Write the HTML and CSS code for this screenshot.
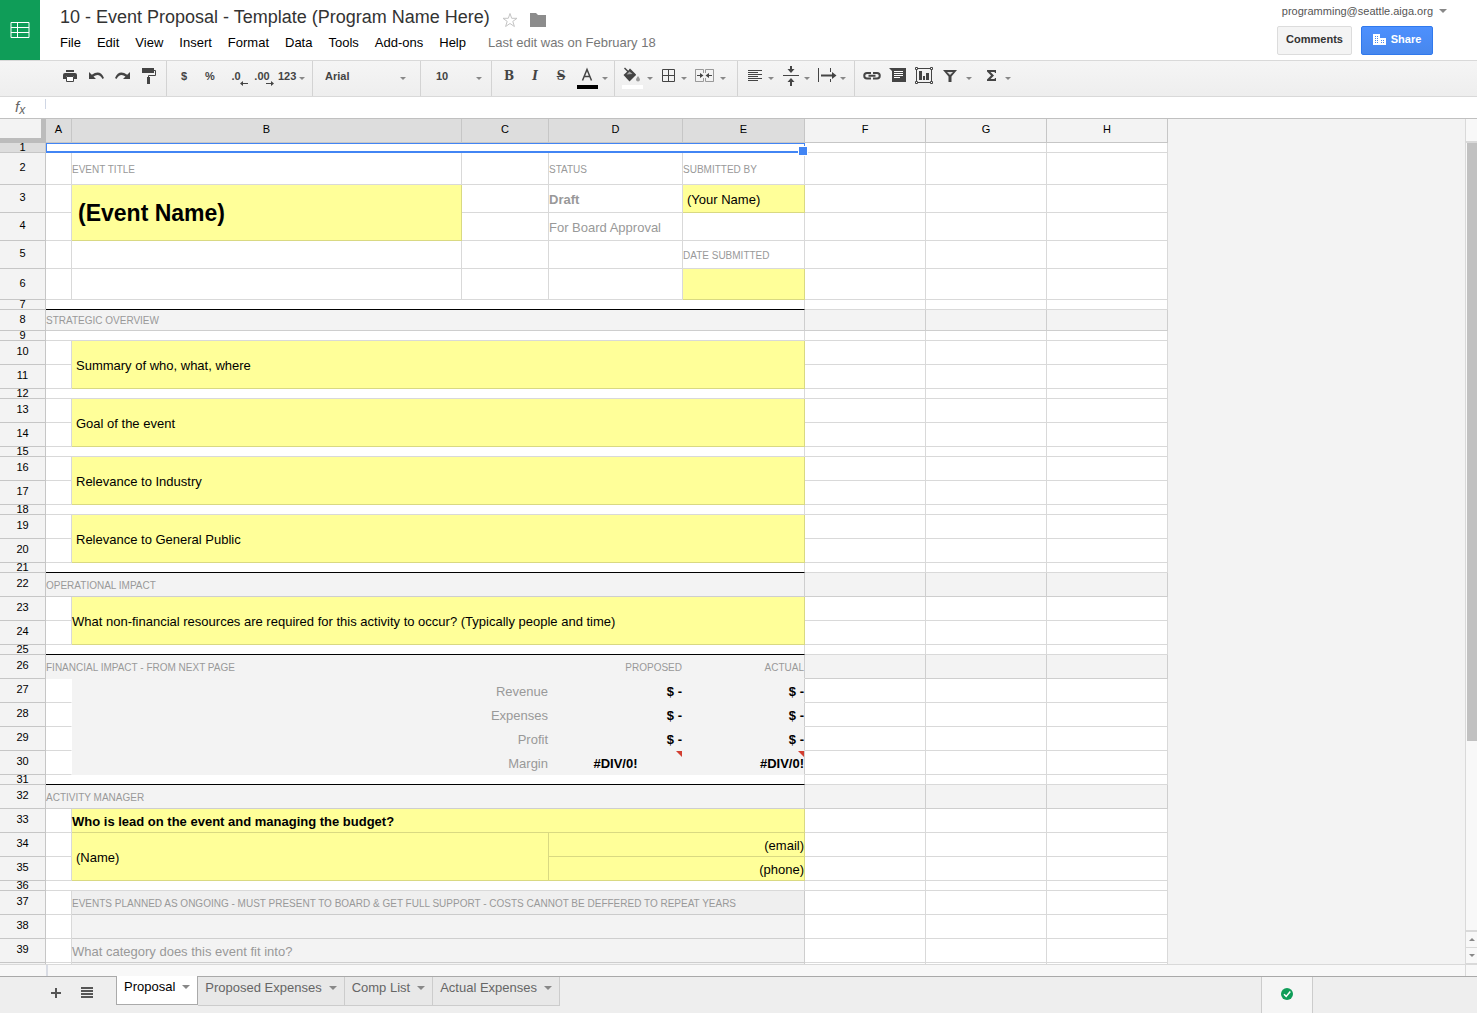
FILE: index.html
```html
<!DOCTYPE html>
<html lang="en">
<head>
    <meta charset="utf-8">
    <title>10 - Event Proposal - Template (Program Name Here)</title>
    <link rel="stylesheet" href="styles.css">
</head>
<body>
    <header class="header">
        <a class="logo" href="#" aria-label="Sheets home">
            <svg width="20" height="16" viewBox="0 0 20 16" fill="none" stroke="#fff"><path d="M1 .5h18v15H1zM1 5.5h18M1 10.5h18M7.5 .5v15"/></svg>
        </a>
        <div class="doc">
            <div class="title-row">
                <h1>10 - Event Proposal - Template (Program Name Here)</h1>
                <button class="plain" aria-label="Star">
                    <svg width="16" height="16" viewBox="0 0 16 16" fill="none" stroke="#c4c4c4"><path d="M8 1.500l1.700 4.800h5.300l-4.200 3.100 1.600 5.100L8 11.500l-4.400 3 1.600-5.100L1 6.300h5.300z"/></svg>
                </button>
                <button class="plain" aria-label="Move to folder">
                    <svg width="16" height="14" viewBox="0 0 16 14" fill="#8c8c8c"><path d="M0 0h6l2 2h8v12H0z"/></svg>
                </button>
            </div>
            <nav class="menu">
                <button>File</button>
                <button>Edit</button>
                <button>View</button>
                <button>Insert</button>
                <button>Format</button>
                <button>Data</button>
                <button>Tools</button>
                <button>Add-ons</button>
                <button>Help</button>
                <span class="last-edit">Last edit was on February 18</span>
            </nav>
        </div>
        <div class="account">
            <button class="email">programming@seattle.aiga.org <span class="caret big"></span></button>
            <div class="actions">
                <button class="btn">Comments</button>
                <button class="btn share">
                    <svg width="13" height="11" viewBox="0 0 13 11"><path fill="#fff" d="M0 0h7v4h6v7H0z"/><path stroke="#4787ed" stroke-dasharray="1 1" d="M2 2.5h4M2 4.5h4M2 6.5h4M2 8.5h4M8 6.5h4M8 8.5h4"/></svg>
                    Share
                </button>
            </div>
        </div>
    </header>

    <div class="toolbar">
        <div class="group first">
            <button class="tool" aria-label="Print">
                <svg width="20" height="20" viewBox="0 0 20 20" fill="#444"><path d="M6 4h8v2H6zM5 7h10q2 0 2 2v4h-3v-3H6v3H3V9q0-2 2-2z"/><path d="M6.500 10.500h7v5h-7z" fill="#fff" stroke="#444"/></svg>
            </button>
            <button class="tool" aria-label="Undo">
                <svg width="20" height="20" viewBox="0 0 20 20" fill="#444"><path d="M3 6v7h7L7.500 10.500Q13 6.500 16.500 13l1.500-1Q14 3 5.800 8.800z"/></svg>
            </button>
            <button class="tool" aria-label="Redo">
                <svg width="20" height="20" viewBox="0 0 20 20" fill="#444"><path d="M18 6v7h-7l2.500-2.500Q8 6.500 4.500 13L3 12Q7 3 15.200 8.800z"/></svg>
            </button>
            <button class="tool" aria-label="Paint format">
                <svg width="20" height="20" viewBox="0 0 20 20"><path d="M4 2h12v5H4z" fill="#444"/><path d="M16 4.500h1.500v5h-7V12" fill="none" stroke="#444"/><path d="M9 11h3v7H9z" fill="#444"/></svg>
            </button>
        </div>
        <div class="group">
            <button class="tool">$</button>
            <button class="tool">%</button>
            <button class="tool" aria-label="Decrease decimal places">.0<svg class="under" width="9" height="5" viewBox="0 0 9 5" fill="#444"><path d="M0 2.500L3 0v2h5v1H3v2z"/></svg></button>
            <button class="tool" aria-label="Increase decimal places">.00<svg class="under" width="9" height="5" viewBox="0 0 9 5" fill="#444"><path d="M8 2.500L5 0v2H0v1h5v2z"/></svg></button>
            <button class="tool drop formats">123<span class="caret"></span></button>
        </div>
        <div class="group">
            <label class="pick font">
                <select aria-label="Font"><option>Arial</option></select>
                <span class="caret"></span>
            </label>
        </div>
        <div class="group">
            <label class="pick size">
                <select aria-label="Font size"><option>10</option></select>
                <span class="caret"></span>
            </label>
        </div>
        <div class="group">
            <button class="tool serif">B</button>
            <button class="tool serif italic">I</button>
            <button class="tool serif strike">S</button>
            <button class="tool drop" aria-label="Text color">
                <svg width="22" height="26" viewBox="2 0 22 26"><path d="M7.500 17.500l4.500-11 4.500 11M9 13.500h6" fill="none" stroke="#444" stroke-width="1.500"/><path d="M2 22h21v4H2z"/></svg>
                <span class="caret"></span>
            </button>
        </div>
        <div class="group">
            <button class="tool drop" aria-label="Fill color">
                <svg width="22" height="26" viewBox="2 0 22 26"><path d="M4.500 5l4 4" stroke="#444" stroke-width="1.500"/><path d="M9.500 6l6 6" stroke="#444" stroke-width="1.500"/><path d="M3.500 12L9.500 6.500l6.500 5.500-6.500 6.500z" fill="#444"/><path d="M6.500 11.500l3-3 3 2.500z" fill="#aaa"/><path d="M18 13q2 2.600 2 3.600a2 2 0 0 1-4 0q0-1 2-3.600z" fill="#999"/><path d="M2 22h21v4H2z" fill="#fff"/></svg>
                <span class="caret"></span>
            </button>
            <button class="tool drop" aria-label="Borders">
                <svg width="20" height="20" viewBox="0 0 20 20" fill="none" stroke="#444"><path d="M4.500 3.500h12v12h-12zM10.500 3.500v12M4.500 9.500h12"/></svg>
                <span class="caret"></span>
            </button>
            <button class="tool drop wide" aria-label="Merge cells">
                <svg width="20" height="20" viewBox="0 0 20 20" fill="none" stroke="#999"><path d="M9.500 7V3.500h-8v4M1.500 12v3.500h8V12M11.500 7V3.500h8v4M19.500 12v3.500h-8V12M1.500 3.500v12M19.500 3.500v12"/><path stroke="#444" d="M3 9.500h4M18 9.500h-4"/><path fill="#444" stroke="none" d="M6 7l3.500 2.500L6 12zM15 7l-3.500 2.500L15 12z"/></svg>
                <span class="caret"></span>
            </button>
        </div>
        <div class="group">
            <button class="tool drop" aria-label="Horizontal align">
                <svg width="20" height="20" viewBox="0 0 20 20" stroke="#444"><path d="M3 4.500h14M3 6.500h10M3 8.500h14M3 10.500h10M3 12.500h14M3 14.500h10"/></svg>
                <span class="caret"></span>
            </button>
            <button class="tool drop" aria-label="Vertical align">
                <svg width="20" height="22" viewBox="0 0 20 22" fill="#444"><path d="M2 10h16v1H2zM9 1h2v3h2.500L10 8 6.500 4H9zM9 21h2v-4h2.500L10 13l-3.500 4H9z"/></svg>
                <span class="caret"></span>
            </button>
            <button class="tool drop" aria-label="Text wrapping">
                <svg width="20" height="20" viewBox="0 0 20 20" fill="none" stroke="#444"><path d="M1.500 2v14M13.500 2v4M13.500 13v3"/><path stroke-width="2" d="M4 9.500h12"/><path fill="#444" stroke="none" d="M15 6l4.500 3.500L15 13z"/></svg>
                <span class="caret"></span>
            </button>
        </div>
        <div class="group last">
            <button class="tool" aria-label="Insert link">
                <svg width="20" height="20" viewBox="0 0 20 20" fill="none" stroke="#444" stroke-width="2"><path d="M9 7H5a2.700 2.700 0 0 0 0 5.500h4M11 7h4a2.700 2.700 0 0 1 0 5.500h-4M6.500 9.750h7"/></svg>
            </button>
            <button class="tool" aria-label="Insert comment">
                <svg width="20" height="20" viewBox="0 0 20 20"><path d="M1 2h17v14H4V5z" fill="#444"/><path d="M6 5.500h9M6 7.500h9M6 9.500h9M6 11.500h6" stroke="#fff"/></svg>
            </button>
            <button class="tool" aria-label="Insert chart">
                <svg width="20" height="20" viewBox="0 0 20 20" fill="none" stroke="#444"><path d="M2.500 2.500h15v14h-15z"/><path fill="#fff" d="M1.500 1.500h2v2h-2zM16.500 1.500h2v2h-2zM1.500 15.500h2v2h-2zM16.500 15.500h2v2h-2z"/><path fill="#444" stroke="none" d="M5 5h3v9H5zM9 10h2v4H9zM12 7h3v7h-3z"/></svg>
            </button>
            <button class="tool drop wide" aria-label="Filter">
                <svg width="20" height="20" viewBox="0 0 20 20" fill="#444"><path d="M3 4h14l-5.500 6.500V16h-3v-5.500z"/><path d="M7 6h6L10 9z" fill="#ddd"/></svg>
                <span class="caret"></span>
            </button>
            <button class="tool drop" aria-label="Functions">
                <svg width="20" height="20" viewBox="0 0 20 20" fill="#444"><path d="M5 4h9v3h-1l-.5-1H8.500l3.500 3.500L8.500 13h4l.5-1h1v3H5v-1.500l4-4L5 5.500z"/></svg>
                <span class="caret"></span>
            </button>
        </div>
    </div>

    <div class="formula">
        <label for="fx">f<sub>x</sub></label>
        <input id="fx" type="text">
    </div>

    <main class="workspace">
        <div class="sheet">
            <table>
                <colgroup>
                    <col class="col-n"><col class="col-a"><col class="col-b"><col class="col-c"><col class="col-d"><col class="col-e"><col class="col-f"><col class="col-f"><col class="col-f">
                </colgroup>
                <thead>
                    <tr>
                        <th class="corner"></th>
                        <th class="on">A</th>
                        <th class="on">B</th>
                        <th class="on">C</th>
                        <th class="on">D</th>
                        <th class="on">E</th>
                        <th>F</th>
                        <th>G</th>
                        <th>H</th>
                    </tr>
                </thead>
                <tbody>
                    <tr class="thin"><th class="on">1</th><td class="selected" colspan="5"></td><td></td><td></td><td></td></tr>
                    <tr class="h32"><th>2</th><td></td><td class="label">EVENT TITLE</td><td></td><td class="label">STATUS</td><td class="label">SUBMITTED BY</td><td></td><td></td><td></td></tr>
                    <tr class="h28"><th>3</th><td></td><td class="fill event" rowspan="2">(Event Name)</td><td></td><td class="muted bold">Draft</td><td class="fill indent">(Your Name)</td><td></td><td></td><td></td></tr>
                    <tr class="h28"><th>4</th><td></td><td></td><td class="muted">For Board Approval</td><td></td><td></td><td></td><td></td></tr>
                    <tr class="h28"><th>5</th><td></td><td></td><td></td><td></td><td class="label">DATE SUBMITTED</td><td></td><td></td><td></td></tr>
                    <tr class="h31"><th>6</th><td></td><td></td><td></td><td></td><td class="fill"></td><td></td><td></td><td></td></tr>
                    <tr class="thin"><th>7</th><td class="rule" colspan="5"></td><td></td><td></td><td></td></tr>
                    <tr class="h21 section"><th>8</th><td class="label" colspan="5">STRATEGIC OVERVIEW</td><td></td><td></td><td></td></tr>
                    <tr class="thin"><th>9</th><td colspan="5"></td><td></td><td></td><td></td></tr>
                    <tr><th>10</th><td></td><td class="fill indent" colspan="4" rowspan="2">Summary of who, what, where</td><td></td><td></td><td></td></tr>
                    <tr><th>11</th><td></td><td></td><td></td><td></td></tr>
                    <tr class="thin"><th>12</th><td colspan="5"></td><td></td><td></td><td></td></tr>
                    <tr><th>13</th><td></td><td class="fill indent" colspan="4" rowspan="2">Goal of the event</td><td></td><td></td><td></td></tr>
                    <tr><th>14</th><td></td><td></td><td></td><td></td></tr>
                    <tr class="thin"><th>15</th><td colspan="5"></td><td></td><td></td><td></td></tr>
                    <tr><th>16</th><td></td><td class="fill indent" colspan="4" rowspan="2">Relevance to Industry</td><td></td><td></td><td></td></tr>
                    <tr><th>17</th><td></td><td></td><td></td><td></td></tr>
                    <tr class="thin"><th>18</th><td colspan="5"></td><td></td><td></td><td></td></tr>
                    <tr><th>19</th><td></td><td class="fill indent" colspan="4" rowspan="2">Relevance to General Public</td><td></td><td></td><td></td></tr>
                    <tr><th>20</th><td></td><td></td><td></td><td></td></tr>
                    <tr class="thin"><th>21</th><td class="rule" colspan="5"></td><td></td><td></td><td></td></tr>
                    <tr class="section"><th>22</th><td class="label" colspan="5">OPERATIONAL IMPACT</td><td></td><td></td><td></td></tr>
                    <tr><th>23</th><td></td><td class="fill" colspan="4" rowspan="2">What non-financial resources are required for this activity to occur? (Typically people and time)</td><td></td><td></td><td></td></tr>
                    <tr><th>24</th><td></td><td></td><td></td><td></td></tr>
                    <tr class="thin"><th>25</th><td class="rule" colspan="5"></td><td></td><td></td><td></td></tr>
                    <tr class="section"><th>26</th><td class="label open" colspan="3">FINANCIAL IMPACT - FROM NEXT PAGE</td><td class="label open right">PROPOSED</td><td class="label open right end">ACTUAL</td><td></td><td></td><td></td></tr>
                    <tr class="money"><th>27</th><td></td><td></td><td class="muted">Revenue</td><td>$ -</td><td class="end">$ -</td><td></td><td></td><td></td></tr>
                    <tr class="money"><th>28</th><td></td><td></td><td class="muted">Expenses</td><td>$ -</td><td class="end">$ -</td><td></td><td></td><td></td></tr>
                    <tr class="money"><th>29</th><td></td><td></td><td class="muted">Profit</td><td>$ -</td><td class="end">$ -</td><td></td><td></td><td></td></tr>
                    <tr class="money"><th>30</th><td></td><td></td><td class="muted">Margin</td><td class="error center">#DIV/0!</td><td class="error end">#DIV/0!</td><td></td><td></td><td></td></tr>
                    <tr class="thin"><th>31</th><td class="rule" colspan="5"></td><td></td><td></td><td></td></tr>
                    <tr class="section"><th>32</th><td class="label" colspan="5">ACTIVITY MANAGER</td><td></td><td></td><td></td></tr>
                    <tr><th>33</th><td></td><td class="fill bold" colspan="4">Who is lead on the event and managing the budget?</td><td></td><td></td><td></td></tr>
                    <tr><th>34</th><td></td><td class="fill indent" colspan="2" rowspan="2">(Name)</td><td class="fill right" colspan="2">(email)</td><td></td><td></td><td></td></tr>
                    <tr><th>35</th><td></td><td class="fill right" colspan="2">(phone)</td><td></td><td></td><td></td></tr>
                    <tr class="thin"><th>36</th><td colspan="5"></td><td></td><td></td><td></td></tr>
                    <tr><th>37</th><td></td><td class="label grey dark" colspan="4">EVENTS PLANNED AS ONGOING - MUST PRESENT TO BOARD &amp; GET FULL SUPPORT - COSTS CANNOT BE DEFFERED TO REPEAT YEARS</td><td></td><td></td><td></td></tr>
                    <tr><th>38</th><td></td><td class="grey" colspan="4"></td><td></td><td></td><td></td></tr>
                    <tr><th>39</th><td></td><td class="grey muted" colspan="4">What category does this event fit into?</td><td></td><td></td><td></td></tr>
                    <tr><th></th><td></td><td class="grey" colspan="4"></td><td></td><td></td><td></td></tr>
                </tbody>
            </table>
        </div>
        <div class="scroll-y">
            <div class="scroll-head"></div>
            <div class="track"><div class="thumb"></div></div>
            <button class="step" aria-label="Scroll up"><span class="caret up"></span></button>
            <button class="step" aria-label="Scroll down"><span class="caret"></span></button>
        </div>
    </main>
    <div class="scroll-x"><div class="scroll-x-start"></div><div class="scroll-x-end"></div></div>

    <footer class="footer">
        <button class="plain add" aria-label="Add sheet">
            <svg width="12" height="12" viewBox="0 0 12 12" stroke="#555" stroke-width="2"><path d="M6 1v10M1 6h10"/></svg>
        </button>
        <button class="plain all" aria-label="All sheets">
            <svg width="12" height="12" viewBox="0 0 12 12" stroke="#555" stroke-width="2"><path d="M0 1h12M0 4h12M0 7h12M0 10h12"/></svg>
        </button>
        <div class="tabs">
            <button class="tab active">Proposal<span class="caret big"></span></button>
            <button class="tab">Proposed Expenses<span class="caret big"></span></button>
            <button class="tab">Comp List<span class="caret big"></span></button>
            <button class="tab">Actual Expenses<span class="caret big"></span></button>
        </div>
        <div class="status">
            <svg width="12" height="12" viewBox="0 0 12 12"><circle cx="6" cy="6" r="6" fill="#0f9d58"/><path d="M3 6.200l2.200 2.200L9.300 3.500" fill="none" stroke="#fff" stroke-width="1.500"/></svg>
        </div>
    </footer>
</body>
</html>
```
FILE: styles.css
```css
* {
    box-sizing: border-box;
}
body {
    margin: 0;
    height: 100vh;
    display: flex;
    flex-direction: column;
    overflow: hidden;
    background: #fff;
    color: #000;
    font-family: "Liberation Sans", Arial, sans-serif;
    font-size: 13px;
}
button, input, select {
    font: inherit;
    color: inherit;
    background: none;
    border: none;
    border-radius: 0;
    margin: 0;
    padding: 0;
}
button {
    cursor: pointer;
    white-space: nowrap;
}
svg {
    display: block;
    flex: none;
}
.caret {
    display: block;
    flex: none;
    border: 3px solid transparent;
    border-top-color: #888;
    border-bottom: none;
}
.caret.big {
    border-width: 4px;
    border-bottom: none;
}
.caret.up {
    border-top: none;
    border-bottom: 3px solid #888;
}

/* header */
.header {
    display: flex;
    height: 60px;
    flex: none;
}
.logo {
    width: 40px;
    background: #0f9d58;
    display: flex;
    align-items: center;
    justify-content: center;
}
.doc {
    flex: 1;
    padding: 5px 0 0 20px;
}
.title-row {
    display: flex;
    align-items: center;
    height: 24px;
}
.title-row .plain {
    margin: 5px 0 0 12px;
}
h1 {
    margin: 0;
    font-size: 18px;
    font-weight: normal;
    color: #333;
    white-space: nowrap;
}
.menu {
    display: flex;
    align-items: center;
    gap: 16px;
    height: 26px;
}
.last-edit {
    color: #777;
    margin-left: 6px;
}
.account {
    display: flex;
    flex-direction: column;
    align-items: flex-end;
    padding: 3px 30px 0 0;
}
.email {
    display: flex;
    align-items: center;
    gap: 6px;
    height: 16px;
    font-size: 11px;
    color: #555;
}
.actions {
    display: flex;
    gap: 9px;
    margin: 7px 14px 0 0;
}
.btn {
    display: flex;
    align-items: center;
    justify-content: center;
    gap: 5px;
    width: 75px;
    height: 29px;
    padding-bottom: 3px;
    border: 1px solid #dcdcdc;
    border-radius: 2px;
    background: #f4f4f4;
    color: #333;
    font-size: 11px;
    font-weight: bold;
}
.btn.share {
    width: 72px;
    border-color: #3079ed;
    background: linear-gradient(#4d90fe, #4787ed);
    color: #fff;
}

/* toolbar */
.toolbar {
    display: flex;
    flex: none;
    height: 37px;
    border-top: 1px solid #d9d9d9;
    border-bottom: 1px solid #d9d9d9;
    background: linear-gradient(#f5f5f5, #eee);
    color: #444;
    font-size: 11px;
    font-weight: bold;
}
.group {
    display: flex;
    align-items: center;
    border-right: 1px solid #d3d3d3;
    padding: 0 4px 5px;
}
.group.first {
    padding: 0 5px 5px 57px;
}
.group.last {
    border-right: none;
}
.tool {
    display: flex;
    align-items: center;
    justify-content: center;
    position: relative;
    width: 26px;
    height: 26px;
}
.tool.drop {
    width: 36px;
    justify-content: flex-start;
    padding-left: 3px;
    gap: 3px;
}
.tool.drop .caret {
    margin-top: 4px;
}
.tool.drop.wide {
    width: 42px;
    gap: 6px;
}
.tool.drop.formats {
    width: 33px;
}
.under {
    position: absolute;
    right: 0;
    bottom: 3px;
}
.serif {
    font-family: "DejaVu Serif", "Liberation Serif", serif;
    font-size: 12px;
}
.italic {
    font-style: italic;
}
.strike {
    text-decoration: line-through;
}
.pick {
    display: flex;
    align-items: center;
}
.pick select {
    appearance: none;
    outline: none;
    flex: 1;
    min-width: 0;
}
.pick .caret {
    margin-top: 4px;
}
.pick.font {
    width: 99px;
    padding: 0 10px 0 8px;
}
.pick.size {
    width: 62px;
    padding: 0 5px 0 11px;
}

/* formula bar */
.formula {
    display: flex;
    flex: none;
    height: 22px;
    border-bottom: 1px solid #c0c0c0;
}
.formula label {
    width: 45px;
    padding-left: 15px;
    line-height: 20px;
    font-size: 15px;
    font-style: italic;
    color: #666;
}
.formula sub {
    font-size: 12px;
    line-height: 1;
    vertical-align: -2px;
}
.formula input {
    flex: 1;
    height: 10px;
    margin-top: 2px;
    border-left: 1px solid #cfd6e4;
    outline: none;
}

/* grid */
.workspace {
    display: flex;
    flex: 1;
    min-height: 0;
    background: #f3f3f3;
}
.sheet {
    flex: 1;
    overflow: hidden;
}
table {
    width: 1168px;
    table-layout: fixed;
    border-collapse: separate;
    border-spacing: 0;
    background: #fff;
}
.col-n { width: 46px; }
.col-a { width: 26px; }
.col-b { width: 390px; }
.col-c { width: 87px; }
.col-d { width: 134px; }
.col-e { width: 122px; }
.col-f { width: 121px; }
th {
    height: 24px;
    padding: 0 0 3px;
    border-right: 1px solid #c6c6c6;
    border-bottom: 1px solid #c6c6c6;
    background: #f3f3f3;
    font-size: 11px;
    font-weight: normal;
    line-height: 12px;
}
th.on {
    background: #ddd;
}
th.corner {
    border-right: 5px solid #bcbcbc;
    border-bottom: 5px solid #bcbcbc;
}
td {
    padding: 1px 0 0;
    border-right: 1px solid rgba(0, 0, 0, 0.15);
    border-bottom: 1px solid rgba(0, 0, 0, 0.15);
    font-size: 13px;
    line-height: 15px;
    white-space: nowrap;
}
.thin th {
    height: 10px;
    padding: 0 0 1px;
    line-height: 8px;
}
.thin td {
    padding: 0;
}
.h21 th { height: 21px; }
.h28 th { height: 28px; }
.h31 th { height: 31px; }
.h32 th { height: 32px; }
.selected {
    position: relative;
    border: 1px solid #4285f4;
    border-bottom-width: 2px;
}
.selected::after {
    content: "";
    position: absolute;
    right: -4px;
    bottom: -5px;
    width: 8px;
    height: 8px;
    border: 1px solid #fff;
    background: #4285f4;
}
.label {
    font-size: 10px;
    color: #999;
}
.muted {
    color: #999;
}
.bold {
    font-weight: bold;
}
.right {
    text-align: right;
}
.fill {
    background: #ff9;
}
.indent {
    padding-left: 4px;
}
.event {
    padding-left: 6px;
    font-size: 23px;
    font-weight: bold;
    line-height: 28px;
}
.rule {
    border-bottom-color: #000;
}
.section td {
    background: #f3f3f3;
}
.grey {
    background: #f3f3f3;
}
.grey.dark {
    background: #efefef;
}
.open {
    border-color: transparent;
}
.open.end {
    border-right-color: rgba(0, 0, 0, 0.15);
}
.money td:nth-child(n+3):nth-child(-n+6) {
    background: #f3f3f3;
    border-color: transparent;
    text-align: right;
    font-weight: bold;
}
.money td:nth-child(2) {
    border-right-color: transparent;
}
.money td.end:nth-child(6) {
    border-right-color: rgba(0, 0, 0, 0.15);
}
.money td.muted:nth-child(4) {
    font-weight: normal;
}
.money td.center:nth-child(5) {
    text-align: center;
}
.error {
    position: relative;
}
.error::after {
    content: "";
    position: absolute;
    top: 0;
    right: 0;
    border-top: 6px solid #d23f31;
    border-left: 6px solid transparent;
}

/* scrollbars */
.scroll-y {
    display: flex;
    flex-direction: column;
    width: 12px;
    border-left: 1px solid #d9d9d9;
    background: #f8f8f8;
}
.scroll-head {
    height: 24px;
    border-bottom: 2px solid #d9d9d9;
}
.track {
    flex: 1;
    padding-left: 1px;
    border-bottom: 2px solid #d9d9d9;
}
.thumb {
    height: 76%;
    background: #c1c1c1;
}
.step {
    display: flex;
    align-items: center;
    justify-content: center;
    height: 16px;
    border-bottom: 1px solid #d9d9d9;
}
.scroll-x {
    display: flex;
    flex: none;
    justify-content: space-between;
    height: 12px;
    border-top: 1px solid #d9d9d9;
    background: #f8f8f8;
}
.scroll-x-start {
    width: 48px;
    border-right: 2px solid #d9dce4;
}
.scroll-x-end {
    width: 12px;
    border-left: 1px solid #d9d9d9;
}

/* sheet tabs */
.footer {
    display: flex;
    flex: none;
    height: 37px;
    border-top: 1px solid #a9a9a9;
    background: #eee;
}
.add {
    padding: 0 0 5px 50px;
}
.all {
    padding: 0 0 5px 19px;
}
.tabs {
    display: flex;
    align-items: flex-start;
    flex: 1;
    padding-left: 23px;
}
.tab {
    display: flex;
    align-items: center;
    gap: 7px;
    height: 29px;
    padding: 0 7px 7px;
    border: 1px solid #ccc;
    border-top: none;
    border-left: none;
    background: #e8e8e8;
    color: #666;
}
.tab.active {
    margin-top: -1px;
    border-left: 1px solid #aaa;
    border-right-color: #aaa;
    border-bottom-color: #aaa;
    background: #fff;
    color: #000;
}
.status {
    display: flex;
    align-items: center;
    justify-content: center;
    width: 52px;
    margin-right: 164px;
    padding-bottom: 2px;
    border-left: 1px solid #ccc;
    border-right: 1px solid #ccc;
    background: #f5f5f5;
}
```
